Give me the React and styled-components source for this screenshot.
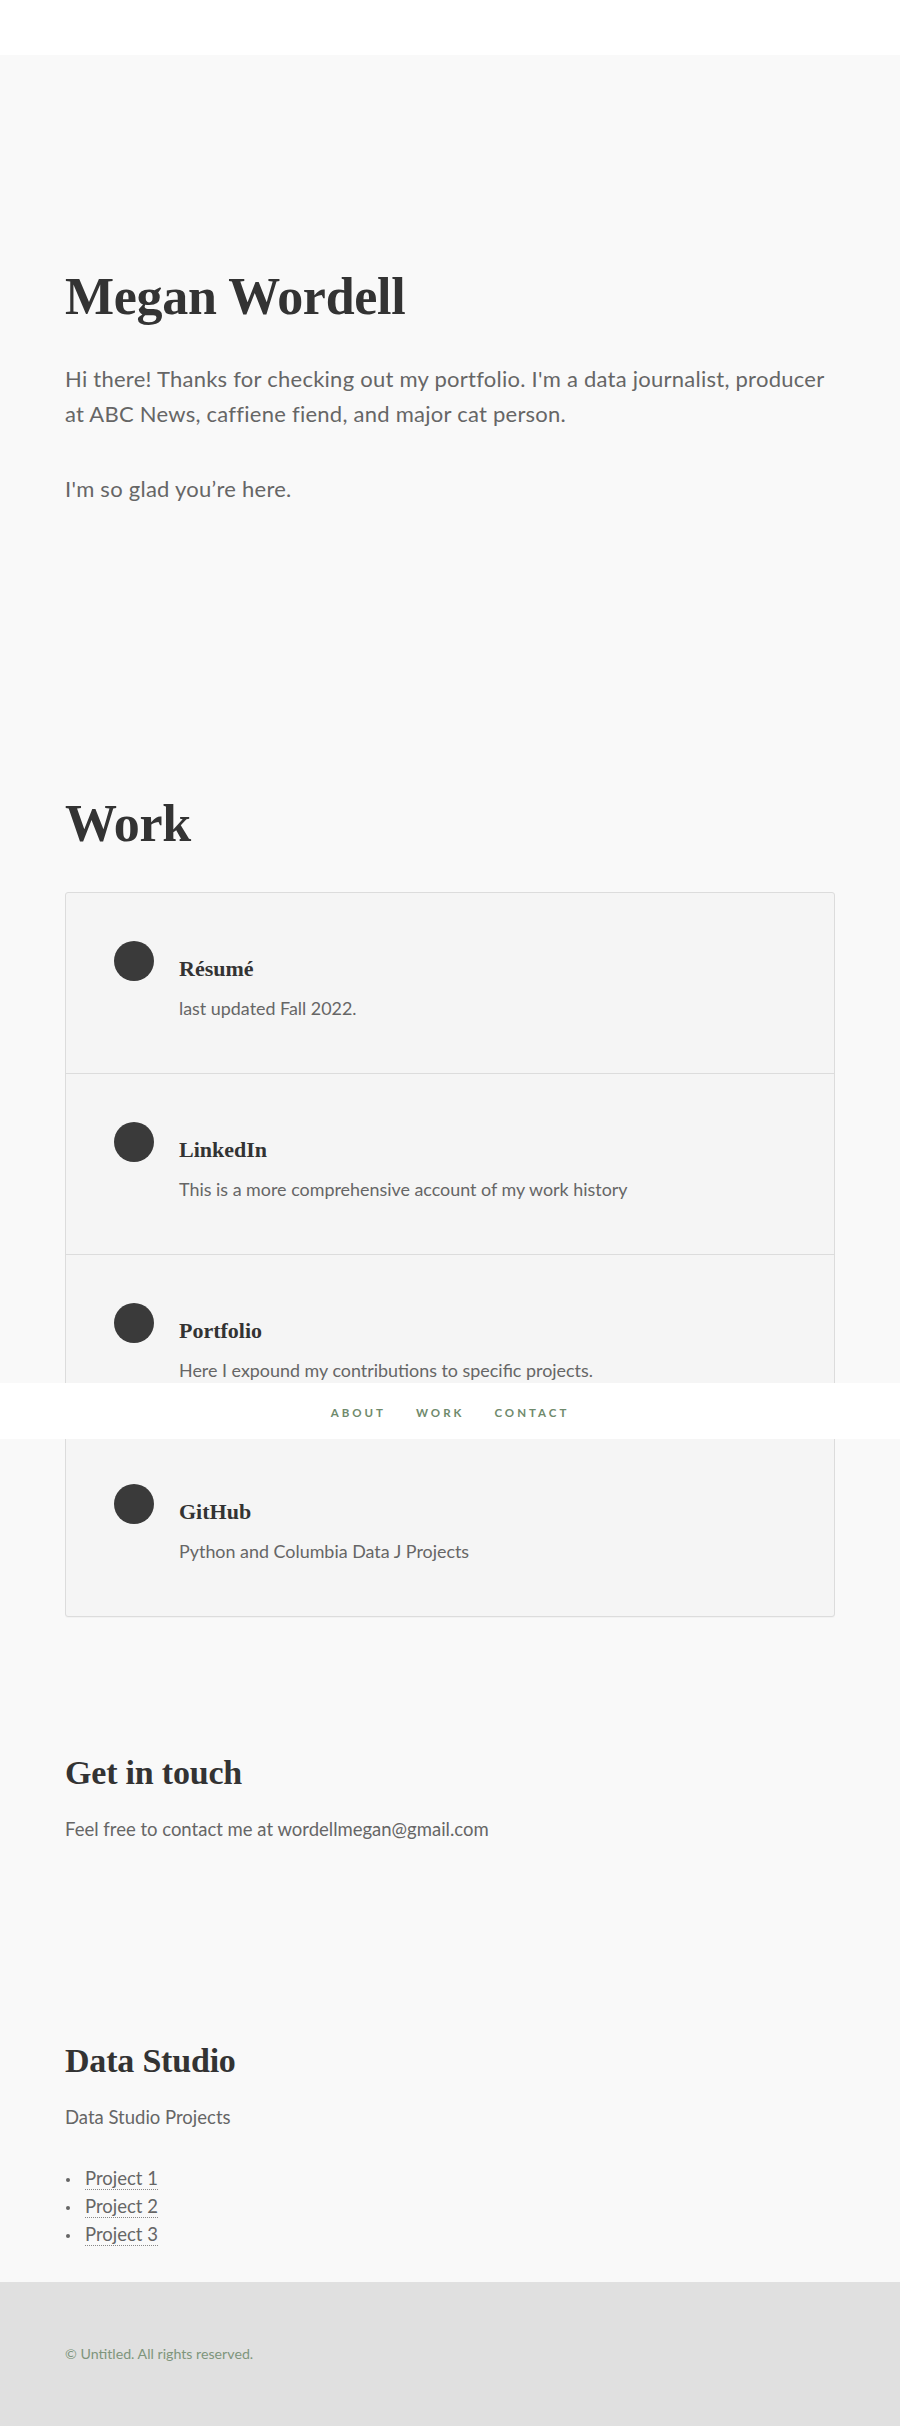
import React from "react";
import styled, { createGlobalStyle } from "styled-components";

const GlobalStyle = createGlobalStyle`
  html, body { margin: 0; padding: 0; }
  body {
    background: #f9f9f9;
    font-family: Lato, "Liberation Sans", sans-serif;
    color: #666;
  }
  * { box-sizing: border-box; }
`;

const Page = styled.div`
  position: relative;
  min-height: 2426px;
  display: flex;
  flex-direction: column;
  background: #f9f9f9;
`;

const Header = styled.header`
  height: 55px;
  background: #fff;
`;

const Main = styled.main`
  flex: 1;
  padding: 0 65px;
`;

const Section = styled.section`
  padding-top: ${(p) => p.$top}px;
`;

const BigTitle = styled.h1`
  margin: 0;
  font-family: "Liberation Serif", serif;
  font-weight: 700;
  font-size: 52px;
  line-height: 57px;
  letter-spacing: -0.3px;
  color: #333;
`;

const SubTitle = styled.h2`
  margin: 0;
  font-family: "Liberation Serif", serif;
  font-weight: 700;
  font-size: 34px;
  line-height: 41px;
  letter-spacing: -0.2px;
  color: #333;
`;

const Intro = styled.p`
  margin: ${(p) => p.$mt}px 0 0;
  font-size: 22px;
  line-height: 35px;
  letter-spacing: 0.25px;
  color: #666;
`;

const Body = styled.p`
  margin: ${(p) => p.$mt}px 0 0;
  font-size: 18.5px;
  line-height: 28px;
  color: #666;
`;

const Card = styled.div`
  margin-top: 40px;
  background: #f5f5f5;
  border: 1px solid #dcdcdc;
  border-radius: 3px;
  box-shadow: 0 1px 1px rgba(0, 0, 0, 0.03);
`;

const Row = styled.a`
  display: grid;
  grid-template-columns: 40px 1fr;
  column-gap: 25px;
  padding: 48px 48px 51px;
  text-decoration: none;
  & + & {
    border-top: 1px solid #dcdcdc;
  }
`;

const Dot = styled.span`
  width: 40px;
  height: 40px;
  border-radius: 50%;
  background: #3a3a3a;
`;

const RowText = styled.div`
  padding-top: 13px;
`;

const RowTitle = styled.h3`
  margin: 0;
  font-family: "Liberation Serif", serif;
  font-weight: 700;
  font-size: 22px;
  line-height: 30px;
  color: #333;
`;

const RowDesc = styled.p`
  margin: 10px 0 0;
  font-size: 17.9px;
  line-height: 28px;
  color: #666;
`;

const List = styled.ul`
  margin: 33px 0 0;
  padding: 0;
  list-style: none;
`;

const Item = styled.li`
  font-size: 18.5px;
  line-height: 28px;
  &::before {
    content: "";
    display: inline-block;
    vertical-align: middle;
    width: 4px;
    height: 4px;
    border-radius: 50%;
    background: #666;
    margin: 0 15px 0 1px;
  }
`;

const Link = styled.a`
  color: #666;
  text-decoration: none;
  border-bottom: 1px dotted #888;
`;

const Footer = styled.footer`
  background: #e0e0e0;
  height: 145px;
  padding: 62px 65px 0;
  margin-top: 34px;
`;

const Copy = styled.p`
  margin: 0;
  font-size: 14.2px;
  line-height: 20px;
  color: #7e957c;
`;

const Nav = styled.nav`
  position: absolute;
  left: 0;
  right: 0;
  top: 1383px;
  height: 56px;
  background: #fff;
  display: flex;
  justify-content: center;
  align-items: center;
  gap: 30px;
`;

const NavLink = styled.a`
  font-size: 11.5px;
  font-weight: 700;
  letter-spacing: 3px;
  text-transform: uppercase;
  color: #6f8a6c;
  text-decoration: none;
  padding-top: 3px;
`;

const work = [
  { title: "Résumé", desc: "last updated Fall 2022." },
  { title: "LinkedIn", desc: "This is a more comprehensive account of my work history" },
  { title: "Portfolio", desc: "Here I expound my contributions to specific projects." },
  { title: "GitHub", desc: "Python and Columbia Data J Projects" },
];

export default function App() {
  return (
    <>
      <GlobalStyle />
      <Page>
        <Header />
        <Main>
          <Section $top={213}>
            <BigTitle>Megan Wordell</BigTitle>
            <Intro $mt={36}>
              Hi there! Thanks for checking out my portfolio. I'm a data journalist, producer at ABC News, caffiene fiend, and major cat person.
            </Intro>
            <Intro $mt={40}>I'm so glad you’re here.</Intro>
          </Section>
          <Section $top={289}>
            <BigTitle as="h2">Work</BigTitle>
            <Card>
              {work.map((w) => (
                <Row key={w.title} href="#">
                  <Dot />
                  <RowText>
                    <RowTitle>{w.title}</RowTitle>
                    <RowDesc>{w.desc}</RowDesc>
                  </RowText>
                </Row>
              ))}
            </Card>
          </Section>
          <Section $top={135}>
            <SubTitle>Get in touch</SubTitle>
            <Body $mt={22}>Feel free to contact me at wordellmegan@gmail.com</Body>
          </Section>
          <Section $top={197}>
            <SubTitle>Data Studio</SubTitle>
            <Body $mt={22}>Data Studio Projects</Body>
            <List>
              <Item><Link href="#">Project 1</Link></Item>
              <Item><Link href="#">Project 2</Link></Item>
              <Item><Link href="#">Project 3</Link></Item>
            </List>
          </Section>
        </Main>
        <Footer>
          <Copy>© Untitled. All rights reserved.</Copy>
        </Footer>
        <Nav>
          <NavLink href="#">About</NavLink>
          <NavLink href="#">Work</NavLink>
          <NavLink href="#">Contact</NavLink>
        </Nav>
      </Page>
    </>
  );
}
